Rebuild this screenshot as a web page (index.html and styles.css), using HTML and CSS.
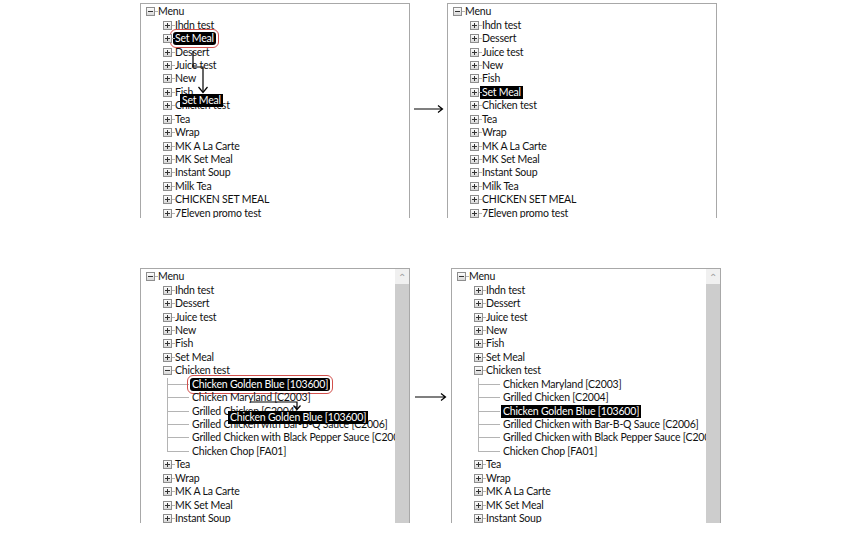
FILE: index.html
```html
<!DOCTYPE html>
<html lang="en">
<head>
  <meta charset="UTF-8" />
  <title>Tree drag and drop</title>
  <link rel="stylesheet" href="styles.css">
</head>
<body>
  <div class="page">
    <!-- top: moving Set Meal below Fish -->
    <div class="step step-top">
      <div class="tree-panel">
        <div class="tree">
          <div class="node"><span class="exp open"></span><span class="label">Menu</span></div>
          <div class="node lvl-1"><span class="exp"></span><span class="label">Ihdn test</span></div>
          <div class="node lvl-1"><span class="exp"></span><span class="label selected ring">Set Meal</span></div>
          <div class="node lvl-1"><span class="exp"></span><span class="label">Dessert</span></div>
          <div class="node lvl-1"><span class="exp"></span><span class="label">Juice test</span></div>
          <div class="node lvl-1"><span class="exp"></span><span class="label">New</span></div>
          <div class="node lvl-1"><span class="exp"></span><span class="label">Fish</span></div>
          <div class="node lvl-1"><span class="exp"></span><span class="label">Chicken test</span></div>
          <div class="node lvl-1"><span class="exp"></span><span class="label">Tea</span></div>
          <div class="node lvl-1"><span class="exp"></span><span class="label">Wrap</span></div>
          <div class="node lvl-1"><span class="exp"></span><span class="label">MK A La Carte</span></div>
          <div class="node lvl-1"><span class="exp"></span><span class="label">MK Set Meal</span></div>
          <div class="node lvl-1"><span class="exp"></span><span class="label">Instant Soup</span></div>
          <div class="node lvl-1"><span class="exp"></span><span class="label">Milk Tea</span></div>
          <div class="node lvl-1"><span class="exp"></span><span class="label">CHICKEN SET MEAL</span></div>
          <div class="node lvl-1"><span class="exp"></span><span class="label">7Eleven promo test</span></div>
        </div>
        <svg class="drag-path drag-top" width="30" height="50" viewBox="0 0 30 50">
          <path d="M4 1 V17 H14 V42" fill="none" stroke="#000" stroke-width="1.2"/>
          <path d="M9.5 37 L14 42.5 L18.5 37" fill="none" stroke="#000" stroke-width="1.2"/>
        </svg>
        <span class="ghost ghost-top">Set Meal</span>
      </div>
      <div class="arrow">
        <svg width="32" height="10" viewBox="0 0 32 10"><path d="M1 5 H29 M25 1.5 L29.5 5 L25 8.5" fill="none" stroke="#000" stroke-width="1.2"/></svg>
      </div>
      <div class="tree-panel">
        <div class="tree">
          <div class="node"><span class="exp open"></span><span class="label">Menu</span></div>
          <div class="node lvl-1"><span class="exp"></span><span class="label">Ihdn test</span></div>
          <div class="node lvl-1"><span class="exp"></span><span class="label">Dessert</span></div>
          <div class="node lvl-1"><span class="exp"></span><span class="label">Juice test</span></div>
          <div class="node lvl-1"><span class="exp"></span><span class="label">New</span></div>
          <div class="node lvl-1"><span class="exp"></span><span class="label">Fish</span></div>
          <div class="node lvl-1"><span class="exp"></span><span class="label selected">Set Meal</span></div>
          <div class="node lvl-1"><span class="exp"></span><span class="label">Chicken test</span></div>
          <div class="node lvl-1"><span class="exp"></span><span class="label">Tea</span></div>
          <div class="node lvl-1"><span class="exp"></span><span class="label">Wrap</span></div>
          <div class="node lvl-1"><span class="exp"></span><span class="label">MK A La Carte</span></div>
          <div class="node lvl-1"><span class="exp"></span><span class="label">MK Set Meal</span></div>
          <div class="node lvl-1"><span class="exp"></span><span class="label">Instant Soup</span></div>
          <div class="node lvl-1"><span class="exp"></span><span class="label">Milk Tea</span></div>
          <div class="node lvl-1"><span class="exp"></span><span class="label">CHICKEN SET MEAL</span></div>
          <div class="node lvl-1"><span class="exp"></span><span class="label">7Eleven promo test</span></div>
        </div>
      </div>
    </div>

    <!-- bottom: moving Chicken Golden Blue inside Chicken test -->
    <div class="step step-bottom">
      <div class="tree-panel">
        <div class="tree">
          <div class="node"><span class="exp open"></span><span class="label">Menu</span></div>
          <div class="node lvl-1"><span class="exp"></span><span class="label">Ihdn test</span></div>
          <div class="node lvl-1"><span class="exp"></span><span class="label">Dessert</span></div>
          <div class="node lvl-1"><span class="exp"></span><span class="label">Juice test</span></div>
          <div class="node lvl-1"><span class="exp"></span><span class="label">New</span></div>
          <div class="node lvl-1"><span class="exp"></span><span class="label">Fish</span></div>
          <div class="node lvl-1"><span class="exp"></span><span class="label">Set Meal</span></div>
          <div class="node lvl-1"><span class="exp open"></span><span class="label">Chicken test</span></div>
          <div class="node lvl-2"><span class="branch"></span><span class="label selected ring">Chicken Golden Blue [103600]</span></div>
          <div class="node lvl-2"><span class="branch"></span><span class="label">Chicken Maryland [C2003]</span></div>
          <div class="node lvl-2"><span class="branch"></span><span class="label">Grilled Chicken [C2004]</span></div>
          <div class="node lvl-2"><span class="branch"></span><span class="label">Grilled Chicken with Bar-B-Q Sauce [C2006]</span></div>
          <div class="node lvl-2"><span class="branch"></span><span class="label">Grilled Chicken with Black Pepper Sauce [C2007]</span></div>
          <div class="node lvl-2 last"><span class="branch"></span><span class="label">Chicken Chop [FA01]</span></div>
          <div class="node lvl-1"><span class="exp"></span><span class="label">Tea</span></div>
          <div class="node lvl-1"><span class="exp"></span><span class="label">Wrap</span></div>
          <div class="node lvl-1"><span class="exp"></span><span class="label">MK A La Carte</span></div>
          <div class="node lvl-1"><span class="exp"></span><span class="label">MK Set Meal</span></div>
          <div class="node lvl-1"><span class="exp"></span><span class="label">Instant Soup</span></div>
        </div>
        <div class="scrollbar"><span class="scroll-up">&#8963;</span><span class="scroll-thumb"></span></div>
        <svg class="drag-path drag-bottom" width="60" height="14" viewBox="0 0 60 14">
          <path d="M1 4 H48 V11" fill="none" stroke="#000" stroke-width="1.2"/>
          <path d="M44.5 7.5 L48 11.5 L51.5 7.5" fill="none" stroke="#000" stroke-width="1.2"/>
        </svg>
        <span class="ghost ghost-bottom">Chicken Golden Blue [103600]</span>
      </div>
      <div class="arrow">
        <svg width="34" height="10" viewBox="0 0 34 10"><path d="M1 5 H31 M27 1.5 L31.5 5 L27 8.5" fill="none" stroke="#000" stroke-width="1.2"/></svg>
      </div>
      <div class="tree-panel">
        <div class="tree">
          <div class="node"><span class="exp open"></span><span class="label">Menu</span></div>
          <div class="node lvl-1"><span class="exp"></span><span class="label">Ihdn test</span></div>
          <div class="node lvl-1"><span class="exp"></span><span class="label">Dessert</span></div>
          <div class="node lvl-1"><span class="exp"></span><span class="label">Juice test</span></div>
          <div class="node lvl-1"><span class="exp"></span><span class="label">New</span></div>
          <div class="node lvl-1"><span class="exp"></span><span class="label">Fish</span></div>
          <div class="node lvl-1"><span class="exp"></span><span class="label">Set Meal</span></div>
          <div class="node lvl-1"><span class="exp open"></span><span class="label">Chicken test</span></div>
          <div class="node lvl-2"><span class="branch"></span><span class="label">Chicken Maryland [C2003]</span></div>
          <div class="node lvl-2"><span class="branch"></span><span class="label">Grilled Chicken [C2004]</span></div>
          <div class="node lvl-2"><span class="branch"></span><span class="label selected">Chicken Golden Blue [103600]</span></div>
          <div class="node lvl-2"><span class="branch"></span><span class="label">Grilled Chicken with Bar-B-Q Sauce [C2006]</span></div>
          <div class="node lvl-2"><span class="branch"></span><span class="label">Grilled Chicken with Black Pepper Sauce [C2007]</span></div>
          <div class="node lvl-2 last"><span class="branch"></span><span class="label">Chicken Chop [FA01]</span></div>
          <div class="node lvl-1"><span class="exp"></span><span class="label">Tea</span></div>
          <div class="node lvl-1"><span class="exp"></span><span class="label">Wrap</span></div>
          <div class="node lvl-1"><span class="exp"></span><span class="label">MK A La Carte</span></div>
          <div class="node lvl-1"><span class="exp"></span><span class="label">MK Set Meal</span></div>
          <div class="node lvl-1"><span class="exp"></span><span class="label">Instant Soup</span></div>
        </div>
        <div class="scrollbar"><span class="scroll-up">&#8963;</span><span class="scroll-thumb"></span></div>
      </div>
    </div>
  </div>
</body>
</html>
```

FILE: styles.css
```css
body {
  margin: 0;
  background: #fff;
  font-family: Lato, "Noto Sans", sans-serif;
  font-size: 10.5px;
  letter-spacing: -0.2px;
  color: #111;
}
.page {
  width: 863px;
  height: 536px;
  padding-top: 3px;
  box-sizing: border-box;
}
.step {
  display: flex;
  padding-left: 140px;
}
.step-top {
  height: 215px;
}
.step-bottom {
  height: 255px;
  margin-top: 50px;
}
.tree-panel {
  position: relative;
  width: 270px;
  box-sizing: border-box;
  border: 1px solid #a8a8a8;
  border-bottom: none;
  display: flex;
  overflow: hidden;
  background: #fff;
}
.tree {
  flex: 1;
  overflow: hidden;
  white-space: nowrap;
  padding-top: 1px;
}
.node {
  display: flex;
  align-items: center;
  height: 13.45px;
  padding-left: 5px;
}
.node.lvl-1 {
  padding-left: 22px;
}
.node.lvl-2 {
  padding-left: 26px;
}
.exp {
  position: relative;
  flex: none;
  width: 9px;
  height: 9px;
  box-sizing: border-box;
  border: 1px solid #8e8e8e;
  background:
    linear-gradient(#333, #333) center / 5px 1px no-repeat,
    linear-gradient(#333, #333) center / 1px 5px no-repeat,
    linear-gradient(#fdfdfd, #d8d8d8);
}
.exp.open {
  background:
    linear-gradient(#333, #333) center / 5px 1px no-repeat,
    linear-gradient(#fdfdfd, #d8d8d8);
}
.exp::after {
  content: "";
  position: absolute;
  left: 8px;
  top: 3px;
  width: 3px;
  height: 1px;
  background: #b4b4b4;
}
.branch {
  flex: none;
  align-self: stretch;
  width: 22px;
  background:
    linear-gradient(#b4b4b4, #b4b4b4) 0 50% / 100% 1px no-repeat,
    linear-gradient(#b4b4b4, #b4b4b4) 0 0 / 1px 100% no-repeat;
}
.last .branch {
  background:
    linear-gradient(#b4b4b4, #b4b4b4) 0 50% / 100% 1px no-repeat,
    linear-gradient(#b4b4b4, #b4b4b4) 0 0 / 1px 50% no-repeat;
}
.label {
  margin-left: 2px;
  padding: 0 1px;
  line-height: 13px;
}
.selected {
  background: #000;
  color: #fff;
  padding: 0 2px;
  margin-left: 1px;
}
.ring {
  outline: 1.5px solid #d2504c;
  outline-offset: 2px;
  border-radius: 3px;
}
.ghost {
  position: absolute;
  background: #000;
  color: #fff;
  padding: 0 2px;
  line-height: 13px;
  white-space: nowrap;
}
.ghost-top {
  left: 39px;
  top: 90px;
}
.ghost-bottom {
  left: 87px;
  top: 142px;
}
.drag-path {
  position: absolute;
}
.drag-top {
  left: 48px;
  top: 46px;
}
.drag-bottom {
  left: 108px;
  top: 129px;
}
.scrollbar {
  flex: none;
  width: 14px;
  display: flex;
  flex-direction: column;
  background: #f0f0f0;
}
.scroll-up {
  height: 15px;
  text-align: center;
  color: #a0a0a0;
  font-size: 10px;
  line-height: 17px;
}
.scroll-thumb {
  flex: 1;
  background: #cdcdcd;
}
.arrow {
  width: 37px;
  display: flex;
  align-items: center;
  justify-content: center;
  padding-bottom: 3px;
}
.step-bottom .arrow {
  width: 41px;
  padding-bottom: 0;
  padding-top: 2px;
}
```
